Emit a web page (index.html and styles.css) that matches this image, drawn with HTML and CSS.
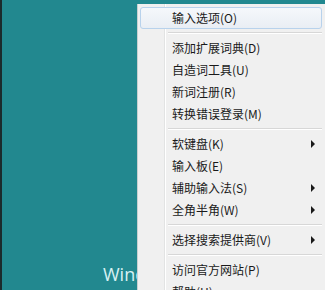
FILE: index.html
```html
<!DOCTYPE html>
<html>
<head>
<meta charset="utf-8">
<link rel="stylesheet" href="styles.css">
</head>
<body>
<div class="screen">
  <div class="edge"></div>
  <div class="desktop"><span class="brand">Windows</span></div>
  <div class="menu">
    <div class="item hl">输入选项(O)</div>
    <div class="sep"></div>
    <div class="item">添加扩展词典(D)</div>
    <div class="item">自造词工具(U)</div>
    <div class="item">新词注册(R)</div>
    <div class="item">转换错误登录(M)</div>
    <div class="sep"></div>
    <div class="item sub">软键盘(K)</div>
    <div class="item">输入板(E)</div>
    <div class="item sub">辅助输入法(S)</div>
    <div class="item sub">全角半角(W)</div>
    <div class="sep"></div>
    <div class="item sub">选择搜索提供商(V)</div>
    <div class="sep"></div>
    <div class="item">访问官方网站(P)</div>
    <div class="item">帮助(H)</div>
  </div>
</div>
</body>
</html>
```

FILE: styles.css
```css
html, body {
  margin: 0;
  padding: 0;
}
body {
  width: 325px;
  height: 290px;
  overflow: hidden;
  background: #21888f;
}
.screen {
  display: flex;
  width: 325px;
  height: 290px;
  overflow: hidden;
}
.edge {
  width: 2px;
  background: #1b2a2c;
  flex: none;
}
.desktop {
  width: 135px;
  flex: none;
  background: #22888f;
  overflow: hidden;
  display: flex;
  flex-direction: column;
  justify-content: flex-end;
  padding-bottom: 4px;
  box-sizing: border-box;
}
.brand {
  display: block;
  padding-left: 101px;
  white-space: nowrap;
  font-family: "Open Sans", "DejaVu Sans", sans-serif;
  font-size: 18px;
  color: #d8f2f4;
  line-height: 24px;
}
.menu {
  flex: none;
  width: 188px;
  margin-top: 4px;
  padding: 3px 3px 0 2px;
  box-sizing: border-box;
  background: #f0f0f0 linear-gradient(to right, transparent 26px, #e2e3e3 26px, #e2e3e3 27px, #ffffff 27px, #ffffff 28px, transparent 28px);
  border-left: 1px solid #c8cfd0;
  font-family: "Noto Sans CJK SC", "Microsoft YaHei", sans-serif;
  font-size: 12px;
  color: #1a1a1a;
}
.item {
  height: 20px;
  line-height: 20px;
  padding-left: 31px;
  position: relative;
  border: 1px solid transparent;
  border-radius: 3px;
  white-space: nowrap;
}
.item.hl {
  border-color: #b8d2ec;
  background: linear-gradient(to bottom, #f5f8fb, #e9eef4);
}
.item.sub::after {
  content: "";
  position: absolute;
  right: 6px;
  top: 6px;
  border-left: 4px solid #1a1a1a;
  border-top: 4px solid transparent;
  border-bottom: 4px solid transparent;
}
.sep {
  height: 1px;
  margin: 3px 0 3px 28px;
  background: #d7d7d7;
  border-bottom: 1px solid #ffffff;
}
```
